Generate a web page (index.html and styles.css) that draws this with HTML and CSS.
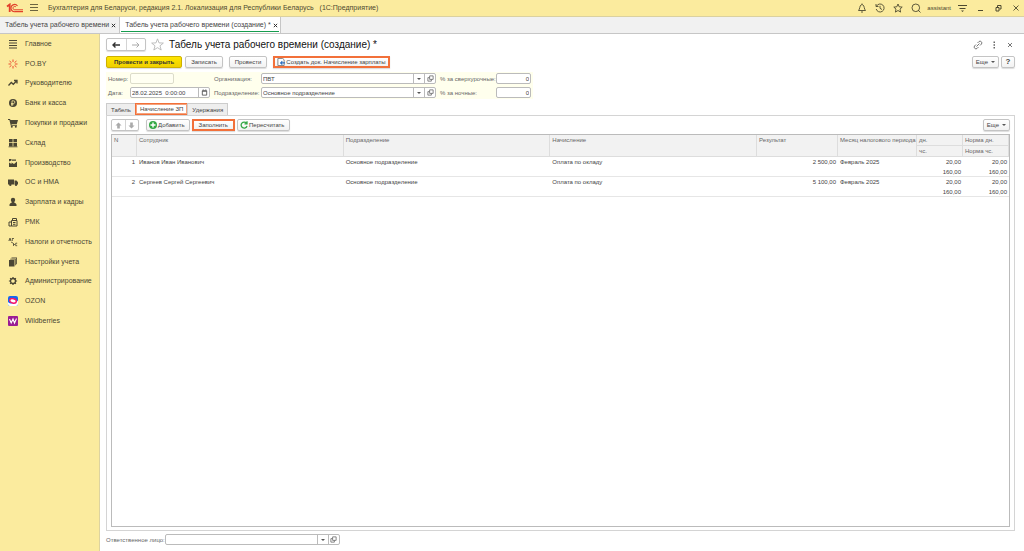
FILE: index.html
```html
<!DOCTYPE html>
<html lang="ru">
<head>
    <meta charset="UTF-8">
    <meta name="viewport" content="width=device-width, initial-scale=1.0">
    <title>Табель учета рабочего времени (создание)</title>
    <link rel="stylesheet" href="styles.css">
</head>
<body>

<header class="topbar">
    <svg class="logo" viewBox="0 0 17 10" fill="none" stroke="#e2402b">
        <path d="M1 3.500L3.700 1.500V9" stroke-width="1.800"/>
        <path d="M11.500 3A3.600 3.600 0 1 0 9 8.700h8" stroke-width="1.200"/>
        <path d="M10 4A1.700 1.700 0 1 0 9 6.800h8" stroke-width="1"/>
    </svg>
    <button class="icon-btn menu-btn" aria-label="Меню">
        <svg viewBox="0 0 10 10" stroke="#6b6440"><path d="M1 1.500h8M1 4.500h8M1 7.500h8"/></svg>
    </button>
    <span class="app-title">Бухгалтерия для Беларуси, редакция 2.1. Локализация для Республики Беларусь</span>
    <span class="app-name">(1С:Предприятие)</span>
    <div class="top-actions">
        <button class="icon-btn" aria-label="Уведомления">
            <svg viewBox="0 0 10 10" fill="none" stroke="#4d4930" stroke-width=".9"><path d="M1.500 7.500C3 6 2.500 3 4 2c.7-.6 1.300-.6 2 0 1.500 1 1 4 2.500 5.500zM4 9h2M5 .5v1"/></svg>
        </button>
        <button class="icon-btn" aria-label="История">
            <svg viewBox="0 0 10 10" fill="none" stroke="#4d4930" stroke-width=".9"><path d="M1.500 3.200A4 4 0 1 1 1.200 6M1 1v2.500h2.500M5 2.800V5.300l2 1.200"/></svg>
        </button>
        <button class="icon-btn" aria-label="Избранное">
            <svg viewBox="0 0 10 10" fill="none" stroke="#4d4930" stroke-width=".9"><path d="M5 1l1.200 2.800 3 .3L7 6.100l.6 3L5 7.500 2.400 9.100l.6-3L.8 4.100l3-.3z"/></svg>
        </button>
        <button class="icon-btn" aria-label="Поиск">
            <svg viewBox="0 0 10 10" fill="none" stroke="#4d4930" stroke-width=".9"><circle cx="4.800" cy="4.800" r="3.800"/><path d="M7 7l2.500 2.500"/></svg>
        </button>
        <a class="user" href="#">assistant</a>
        <button class="icon-btn" aria-label="Настройка">
            <svg viewBox="0 0 10 10" stroke="#4d4930"><path d="M1 2.500h9M2.500 5.500h6"/><path d="M4 7.500h3l-1.500 1.500z" fill="#4d4930" stroke="none"/></svg>
        </button>
        <button class="icon-btn" aria-label="Свернуть">
            <svg viewBox="0 0 10 10" stroke="#4d4930"><path d="M3 7.500h5"/></svg>
        </button>
        <button class="icon-btn" aria-label="Развернуть">
            <svg viewBox="0 0 10 10" fill="none" stroke="#4d4930"><path d="M3 4.500h3v3.500h-3zM4.500 4V2.500H8V6H6.500"/></svg>
        </button>
        <button class="icon-btn" aria-label="Закрыть">
            <svg viewBox="0 0 10 10" stroke="#4d4930" stroke-width=".9"><path d="M2.500 2.500l5 5M7.500 2.500l-5 5"/></svg>
        </button>
    </div>
</header>

<nav class="window-tabs">
    <div class="window-tab">
        <a href="#">Табель учета рабочего времени</a>
        <button class="tab-close" aria-label="Закрыть вкладку"><svg viewBox="0 0 6 6" stroke="#333" stroke-width="1.200"><path d="M1 1l4 4M5 1l-4 4"/></svg></button>
    </div>
    <div class="window-tab current">
        <a href="#">Табель учета рабочего времени (создание) *</a>
        <button class="tab-close" aria-label="Закрыть вкладку"><svg viewBox="0 0 6 6" stroke="#333" stroke-width="1.200"><path d="M1 1l4 4M5 1l-4 4"/></svg></button>
    </div>
</nav>

<div class="workspace">
    <nav class="sidebar">
        <div class="sections">
            <a href="#"><svg viewBox="0 0 10 10" stroke="#4a4634" stroke-width="1.200"><path d="M1 1.500h8M1 4h8M1 6.500h8M1 9h8"/></svg>Главное</a>
            <a href="#"><svg viewBox="0 0 10 10" stroke="#ea4b2e" stroke-width="1"><path d="M5 .5v2.500M5 7v2.500M1.500 2l2 1.700M6.500 6.300l2 1.700M8.500 2l-2 1.700M3.500 6.300l-2 1.700M.5 5H3M7 5h2.500"/></svg>PO.BY</a>
            <a href="#"><svg viewBox="0 0 10 10" fill="none" stroke="#4a4634" stroke-width="1.300"><path d="M.5 7.500l2.800-3 2 1.800L8.500 3M6 2.500h3v3"/></svg>Руководителю</a>
            <a href="#"><svg viewBox="0 0 10 10"><circle cx="5" cy="5" r="4" fill="#4a4634"/><path d="M4 8V2.800h1.500a1.300 1.300 0 0 1 0 2.700H3M3 6.700h2.500" fill="none" stroke="#fbeb9e" stroke-width=".8"/></svg>Банк и касса</a>
            <a href="#"><svg viewBox="0 0 10 10" fill="#4a4634"><path d="M0 1h2l.5 1H10L8.800 6H3.500l.2.700H9v1H2.800L1.400 2H0z"/><circle cx="3.800" cy="8.700" r="1"/><circle cx="7.800" cy="8.700" r="1"/></svg>Покупки и продажи</a>
            <a href="#"><svg viewBox="0 0 10 10" fill="#4a4634"><path d="M1 1h3.600v3.300H1zM5.400 1H9v3.300H5.400zM1 5h3.600v3.300H1zM5.400 5H9v3.300H5.400zM.5 8.500h9v.8h-9z"/></svg>Склад</a>
            <a href="#"><svg viewBox="0 0 10 10" fill="#4a4634"><path d="M1 9V4.500L3.500 6V4.500L6 6l3-2.500V9zM1 1h2.500v1.500L1 3.500zM4 1.500h4v1.300H4z"/></svg>Производство</a>
            <a href="#"><svg viewBox="0 0 10 10" fill="#4a4634"><path d="M0 2.500h6v5H0zM6.500 3.500h2L10 5.300v2.200H6.500z"/><circle cx="2.300" cy="7.800" r="1.200"/><circle cx="8" cy="7.800" r="1.200"/></svg>ОС и НМА</a>
            <a href="#"><svg viewBox="0 0 10 10" fill="#4a4634"><circle cx="5" cy="3" r="2.200"/><path d="M1.500 9V7.500C2 6 4 6 4 5h2c0 1 2 1 2.500 2.500V9z"/></svg>Зарплата и кадры</a>
            <a href="#"><svg viewBox="0 0 10 10" fill="none" stroke="#4a4634"><path d="M3.500 3.500H9V9H3.500zM3.500 5H1v4h2.500M4.500 3.500v-2h4v2M5 5.500h2.500M5 7.300h2.500"/></svg>РМК</a>
            <a href="#"><svg viewBox="0 0 10 10" fill="none" stroke="#4a4634" stroke-width=".8"><path d="M.8 4L2 1l1 3M1.200 3h1.500M4 1.500h2M4.300 1.500V4M3 5l2 1M5.500 6v3M5.500 7.500h1.500M9.200 6.200H7.700v2.500h1.500"/></svg>Налоги и отчетность</a>
            <a href="#"><svg viewBox="0 0 10 10" fill="#4a4634"><path d="M1 3h5.500v6.500H1zM2.200 1.800h5.500v6.500H7V2.500H2.200zM3.500.5H9v6.700H8.200V1.300H3.500z"/></svg>Настройки учета</a>
            <a href="#"><svg viewBox="0 0 10 10" fill="none" stroke="#4a4634"><circle cx="5" cy="5" r="2.500" stroke-width="1.300"/><path d="M5 .9v2M5 7.100v2M.9 5h2M7.100 5h2M2.100 2.100l1.300 1.300M6.600 6.600l1.300 1.300M7.900 2.100L6.600 3.400M3.400 6.600L2.100 7.900" stroke-width="1.200"/></svg>Администрирование</a>
            <a href="#"><svg viewBox="0 0 10 10"><rect width="10" height="10" rx="2" fill="#1268f3"/><path d="M0 6c1 2 6 2.500 10-1.500V8a2 2 0 0 1-2 2H2a2 2 0 0 1-2-2z" fill="#fff"/><ellipse cx="5" cy="4.800" rx="3.400" ry="2.200" fill="#fff" stroke="#f5166b" stroke-width="1.500" transform="rotate(12 5 5)"/></svg>OZON</a>
            <a href="#"><svg viewBox="0 0 10 10"><rect width="10" height="10" rx="1" fill="#9a1c94"/><path d="M1.500 3l1.700 4L5 3l1.500 4L8.500 2.500" fill="none" stroke="#fff" stroke-width="1.100"/></svg>Wildberries</a>
        </div>
    </nav>

    <main class="document">
        <div class="title-row">
            <div class="btn-group history">
                <button aria-label="Назад"><svg viewBox="0 0 8 8" fill="none" stroke="#333" stroke-width="1.400"><path d="M8 4H1M3.500 1.500L1 4l2.500 2.500"/></svg></button>
                <button aria-label="Вперед"><svg viewBox="0 0 8 8" fill="none" stroke="#aaa"><path d="M0 4h7M4.500 1.500L7 4 4.500 6.500"/></svg></button>
            </div>
            <button class="fav" aria-label="В избранное">
                <svg viewBox="0 0 12 12" fill="none" stroke="#b5b5b5" stroke-width=".8"><path d="M6 .8l1.400 3.700 4 .2L8.300 7.200l1.100 3.900L6 8.900l-3.400 2.200 1.100-3.900L.6 4.700l4-.2z"/></svg>
            </button>
            <h1>Табель учета рабочего времени (создание) *</h1>
            <div class="title-actions">
                <button class="icon-btn" aria-label="Ссылка"><svg viewBox="0 0 10 10" fill="none" stroke="#777"><path d="M4.500 3L6 1.500a1.800 1.800 0 0 1 2.500 2.500L7 5.500M5.500 7L4 8.500A1.800 1.800 0 0 1 1.500 6L3 4.500M3.500 6.500l3-3"/></svg></button>
                <button class="icon-btn" aria-label="Меню документа"><svg viewBox="0 0 10 10" fill="#666"><path d="M4.500 1.500H6V3H4.500zM4.500 4.200H6v1.500H4.500zM4.500 7H6v1.500H4.500z"/></svg></button>
                <button class="icon-btn" aria-label="Закрыть документ"><svg viewBox="0 0 10 10" stroke="#777"><path d="M3 3l4 4M7 3L3 7"/></svg></button>
            </div>
        </div>

        <div class="commands">
            <button class="btn primary">Провести и закрыть</button>
            <button class="btn save">Записать</button>
            <button class="btn">Провести</button>
            <button class="btn marked create">
                <svg viewBox="0 0 9 9" fill="none"><path d="M1 .5h5.500L8 2v6.500H1z" fill="#fff" stroke="#777"/><path d="M9 5.500H4M6 3.500l-2 2 2 2" stroke="#2c6fc0" stroke-width="1.200"/></svg>Создать док. Начисление зарплаты
            </button>
            <div class="right">
                <button class="btn more">Еще <i class="caret"></i></button>
                <button class="btn help">?</button>
            </div>
        </div>

        <form class="fields">
            <label for="number">Номер:</label>
            <input class="field number" type="text" id="number" disabled>
            <label for="org">Организация:</label>
            <div class="combo">
                <input type="text" id="org" value="ПВТ">
                <button type="button" aria-label="Выбрать организацию"><i class="caret"></i></button>
                <button type="button" aria-label="Открыть организацию"><svg viewBox="0 0 8 8" fill="none" stroke="#666" stroke-width=".9"><path d="M3 1h4v4H3zM3 3H1v4h4V5"/></svg></button>
            </div>
            <label for="overtime">% за сверхурочные:</label>
            <input class="field amount" type="text" id="overtime" value="0">

            <label for="date">Дата:</label>
            <div class="combo date">
                <input type="text" id="date" value="28.02.2025  0:00:00">
                <button type="button" aria-label="Календарь"><svg viewBox="0 0 8 8" fill="none" stroke="#555"><path d="M1.500 2h5v5h-5zM1.500 2.500h5M2.500.5v1M5.500.5v1"/></svg></button>
            </div>
            <label for="dept">Подразделение:</label>
            <div class="combo">
                <input type="text" id="dept" value="Основное подразделение">
                <button type="button" aria-label="Выбрать подразделение"><i class="caret"></i></button>
                <button type="button" aria-label="Открыть подразделение"><svg viewBox="0 0 8 8" fill="none" stroke="#666" stroke-width=".9"><path d="M3 1h4v4H3zM3 3H1v4h4V5"/></svg></button>
            </div>
            <label for="night">% за ночные:</label>
            <input class="field amount" type="text" id="night" value="0">
        </form>

        <div class="page-tabs">
            <button>Табель</button>
            <button class="active">Начисление ЗП</button>
            <button>Удержания</button>
        </div>

        <section class="page">
            <div class="toolbar">
                <div class="btn-group move">
                    <button aria-label="Вверх"><svg viewBox="0 0 8 8" fill="#aaa"><path d="M4 .5l3.500 3.500h-2v3.500h-3V4h-2z"/></svg></button>
                    <button aria-label="Вниз"><svg viewBox="0 0 8 8" fill="#aaa"><path d="M4 7.500L.5 4h2V.5h3V4h2z"/></svg></button>
                </div>
                <button class="btn add"><svg viewBox="0 0 8 8"><circle cx="4" cy="4" r="4" fill="#35a845"/><path d="M4 1.500v5M1.500 4h5" stroke="#fff" stroke-width="1.400"/></svg>Добавить</button>
                <button class="btn marked fill">Заполнить</button>
                <button class="btn recalc"><svg viewBox="0 0 8 8" fill="none" stroke="#35a845" stroke-width="1.300"><path d="M6.500 2.200A3 3 0 1 0 7 5M7 .3v2.500H4.500"/></svg>Пересчитать</button>
                <div class="right">
                    <button class="btn more">Еще <i class="caret"></i></button>
                </div>
            </div>

            <div class="table-box">
                <table>
                    <colgroup>
                        <col class="c-num"><col class="c-wide"><col class="c-wide"><col class="c-wide"><col class="c-sum"><col class="c-month"><col class="c-days"><col class="c-days">
                    </colgroup>
                    <thead>
                        <tr>
                            <th rowspan="2">N</th>
                            <th rowspan="2">Сотрудник</th>
                            <th rowspan="2">Подразделение</th>
                            <th rowspan="2">Начисление</th>
                            <th rowspan="2">Результат</th>
                            <th rowspan="2">Месяц налогового периода</th>
                            <th>дн.</th>
                            <th>Норма дн.</th>
                        </tr>
                        <tr>
                            <th>чс.</th>
                            <th>Норма чс.</th>
                        </tr>
                    </thead>
                    <tbody>
                        <tr>
                            <td rowspan="2" class="num">1</td>
                            <td rowspan="2">Иванов Иван Иванович</td>
                            <td rowspan="2">Основное подразделение</td>
                            <td rowspan="2">Оплата по окладу</td>
                            <td rowspan="2" class="num">2 500,00</td>
                            <td rowspan="2">Февраль 2025</td>
                            <td class="num">20,00</td>
                            <td class="num">20,00</td>
                        </tr>
                        <tr class="last">
                            <td class="num">160,00</td>
                            <td class="num">160,00</td>
                        </tr>
                    </tbody>
                    <tbody>
                        <tr>
                            <td rowspan="2" class="num">2</td>
                            <td rowspan="2">Сергеев Сергей Сергеевич</td>
                            <td rowspan="2">Основное подразделение</td>
                            <td rowspan="2">Оплата по окладу</td>
                            <td rowspan="2" class="num">5 100,00</td>
                            <td rowspan="2">Февраль 2025</td>
                            <td class="num">20,00</td>
                            <td class="num">20,00</td>
                        </tr>
                        <tr class="last">
                            <td class="num">160,00</td>
                            <td class="num">160,00</td>
                        </tr>
                    </tbody>
                </table>
            </div>
        </section>

        <div class="footer">
            <label for="person">Ответственное лицо:</label>
            <div class="combo">
                <input type="text" id="person">
                <button type="button" aria-label="Выбрать лицо"><i class="caret"></i></button>
                <button type="button" aria-label="Открыть лицо"><svg viewBox="0 0 8 8" fill="none" stroke="#666" stroke-width=".9"><path d="M3 1h4v4H3zM3 3H1v4h4V5"/></svg></button>
            </div>
        </div>
    </main>
</div>

</body>
</html>
```
FILE: styles.css
```css
* {
    box-sizing: border-box;
}
body {
    margin: 0;
    height: 100vh;
    display: flex;
    flex-direction: column;
    font-family: "Liberation Sans", Arial, sans-serif;
    font-size: 6px;
    line-height: 8px;
    color: #444;
    background-color: #fff;
}
button, input {
    font: inherit;
    color: inherit;
    margin: 0;
    padding: 0;
}
button {
    cursor: pointer;
}
a {
    color: inherit;
    text-decoration: none;
}
svg {
    display: block;
    flex: none;
}

/* верхняя панель */
.topbar {
    display: flex;
    align-items: center;
    height: 17px;
    padding: 0 3px 0 6px;
    background-color: #fbeb9e;
    border-bottom: 1px solid #dbd1a0;
    font-size: 7px;
    color: #4d4930;
}
.logo {
    width: 17px;
    height: 10px;
}
.icon-btn {
    border: none;
    background: none;
}
.icon-btn svg {
    width: 10px;
    height: 10px;
}
.menu-btn {
    margin: 0 9px 0 6px;
}
.app-name {
    margin-left: 6px;
}
.top-actions {
    display: flex;
    align-items: center;
    gap: 8px;
    margin-left: auto;
}
.user {
    font-size: 6px;
    margin: 0 -2px;
}

/* вкладки окон */
.window-tabs {
    display: flex;
    height: 17px;
    background-color: #f1f1f1;
    border-bottom: 1px solid #c6c6c6;
    font-size: 7px;
}
.window-tab {
    display: flex;
    align-items: center;
    gap: 2px;
    padding: 0 3px 0 5px;
    border-right: 1px solid #c6c6c6;
}
.window-tab.current {
    position: relative;
    padding-right: 2px;
    background-color: #fff;
}
.window-tab.current::after {
    content: "";
    position: absolute;
    left: 1px;
    right: 1px;
    bottom: 1px;
    height: 1px;
    background-color: #169c4e;
}
.tab-close {
    border: none;
    background: none;
}
.tab-close svg {
    width: 5px;
    height: 5px;
}

.workspace {
    flex: 1;
    display: flex;
    min-height: 0;
}
.sidebar {
    flex: none;
    width: 100px;
    background-color: #fbeb9e;
    border-right: 1px solid #ddd3a0;
    font-size: 7px;
    color: #4a4634;
}
/* разделы делят высоту поровну */
.sections {
    display: grid;
    grid-auto-rows: 1fr;
    height: 297px;
}
.sections a {
    display: flex;
    align-items: center;
    gap: 7px;
    padding-left: 8px;
}
.sections svg {
    width: 10px;
    height: 10px;
}

.document {
    flex: 1;
    display: flex;
    flex-direction: column;
    min-width: 0;
    padding: 4px 9px 6px 6px;
}
.title-row {
    display: flex;
    align-items: center;
    height: 13px;
}
h1 {
    margin: 0 0 0 5px;
    font-size: 10px;
    line-height: 12px;
    font-weight: normal;
    color: #111;
}
.title-actions {
    display: flex;
    gap: 6px;
    margin-left: auto;
}
.fav {
    margin-left: 5px;
    border: none;
    background: none;
}
.fav svg {
    width: 13px;
    height: 13px;
}
.btn-group {
    display: flex;
    border: 1px solid #c4c4c4;
    border-radius: 2px;
    box-shadow: 0 1px 1px #ddd;
}
.btn-group button {
    flex: 1;
    display: flex;
    align-items: center;
    justify-content: center;
    border: none;
    background: none;
}
.btn-group button + button {
    border-left: 1px solid #d4d4d4;
}
.btn-group svg {
    width: 7px;
    height: 7px;
}
.history {
    width: 40px;
    height: 13px;
}
.history svg {
    width: 8px;
    height: 8px;
}

/* кнопки */
.btn {
    display: flex;
    align-items: center;
    justify-content: center;
    gap: 1px;
    height: 12px;
    padding: 0 5px;
    border: 1px solid #c4c4c4;
    border-radius: 2px;
    background: linear-gradient(#fff, #f2f2f2);
    box-shadow: 0 1px 1px #ddd;
    white-space: nowrap;
}
.btn svg {
    width: 8px;
    height: 8px;
}
.primary {
    padding: 0 7px;
    border-color: #cdb000;
    background: linear-gradient(#ffe600, #efcf00);
    color: #333;
    font-weight: bold;
}
.marked {
    border: 2px solid #f2703a;
    border-radius: 0;
}
.commands {
    display: flex;
    gap: 6px;
    margin-top: 5px;
}
.save {
    margin-left: -3px;
}
.create {
    padding: 0 2px;
}
.right {
    display: flex;
    gap: 2px;
    margin-left: auto;
}
.more {
    gap: 3px;
    padding: 0 3px;
}
.help {
    width: 14px;
    font-size: 8px;
    font-weight: bold;
}
.caret {
    border: 2px solid transparent;
    border-top-color: #555;
    border-bottom: none;
}

/* реквизиты документа */
.fields {
    align-self: flex-start;
    display: grid;
    grid-template-columns: 22px 84px 47px 179px 56px 35px;
    row-gap: 3px;
    align-items: center;
    margin-top: 4px;
    padding: 1px 2px;
    background-color: #ffffed;
    color: #666;
    white-space: nowrap;
}
.field,
.combo {
    height: 11px;
    border: 1px solid #bbb;
    border-radius: 2px;
    background-color: #fff;
    color: #444;
}
.field {
    padding: 0 1px;
}
.number {
    width: 44px;
    border-color: #dcdcca;
    background-color: #fffff2;
}
.amount {
    width: 35px;
    text-align: right;
}
.combo {
    display: flex;
    width: 175px;
}
.combo.date {
    width: 80px;
}
.combo input {
    flex: 1;
    min-width: 0;
    padding-left: 1px;
    border: none;
    background: none;
    white-space: pre;
}
.combo button {
    display: flex;
    align-items: center;
    justify-content: center;
    width: 11px;
    border: none;
    border-left: 1px solid #bbb;
    background: none;
}
.combo svg {
    width: 7px;
    height: 7px;
}

/* страницы */
.page-tabs {
    display: flex;
    margin-top: 4px;
}
.page-tabs button {
    height: 12px;
    padding: 0 4px;
    border: 1px solid #ccc;
    border-bottom: none;
    background-color: #eee;
}
.page-tabs button + button {
    margin-left: -1px;
}
.page-tabs button.active {
    border: 1px solid #f2703a;
    outline: 1px solid #f5a27c;
    outline-offset: -2px;
    background-color: #fff;
}
.page {
    flex: 1;
    display: flex;
    flex-direction: column;
    min-height: 0;
    padding: 3px 4px;
    border: 1px solid #d4d4d4;
}
.toolbar {
    display: flex;
    gap: 2px;
    margin-bottom: 3px;
}
.move {
    width: 28px;
    height: 12px;
    margin-right: 5px;
}
.add,
.recalc {
    padding: 0 4px 0 2px;
}

.table-box {
    flex: 1;
    overflow: hidden;
    border: 1px solid #bbb;
}
table {
    width: 100%;
    table-layout: fixed;
    border-collapse: separate;
    border-spacing: 0;
}
.c-num {
    width: 25px;
}
.c-sum {
    width: 81px;
}
.c-month {
    width: 79px;
}
.c-days {
    width: 46px;
}
th,
td {
    padding: 1px 2px;
    text-align: left;
    vertical-align: top;
    font-weight: normal;
    white-space: nowrap;
}
th {
    padding-bottom: 1px;
    background-color: #f2f2f2;
    border-right: 1px solid #ddd;
    border-bottom: 1px solid #ddd;
    color: #666;
}
td[rowspan],
.last td {
    padding-bottom: 0;
    border-bottom: 1px solid #e6e6e6;
}
.num {
    text-align: right;
}

.footer {
    display: flex;
    align-items: center;
    margin-top: 3px;
    color: #666;
}
```
